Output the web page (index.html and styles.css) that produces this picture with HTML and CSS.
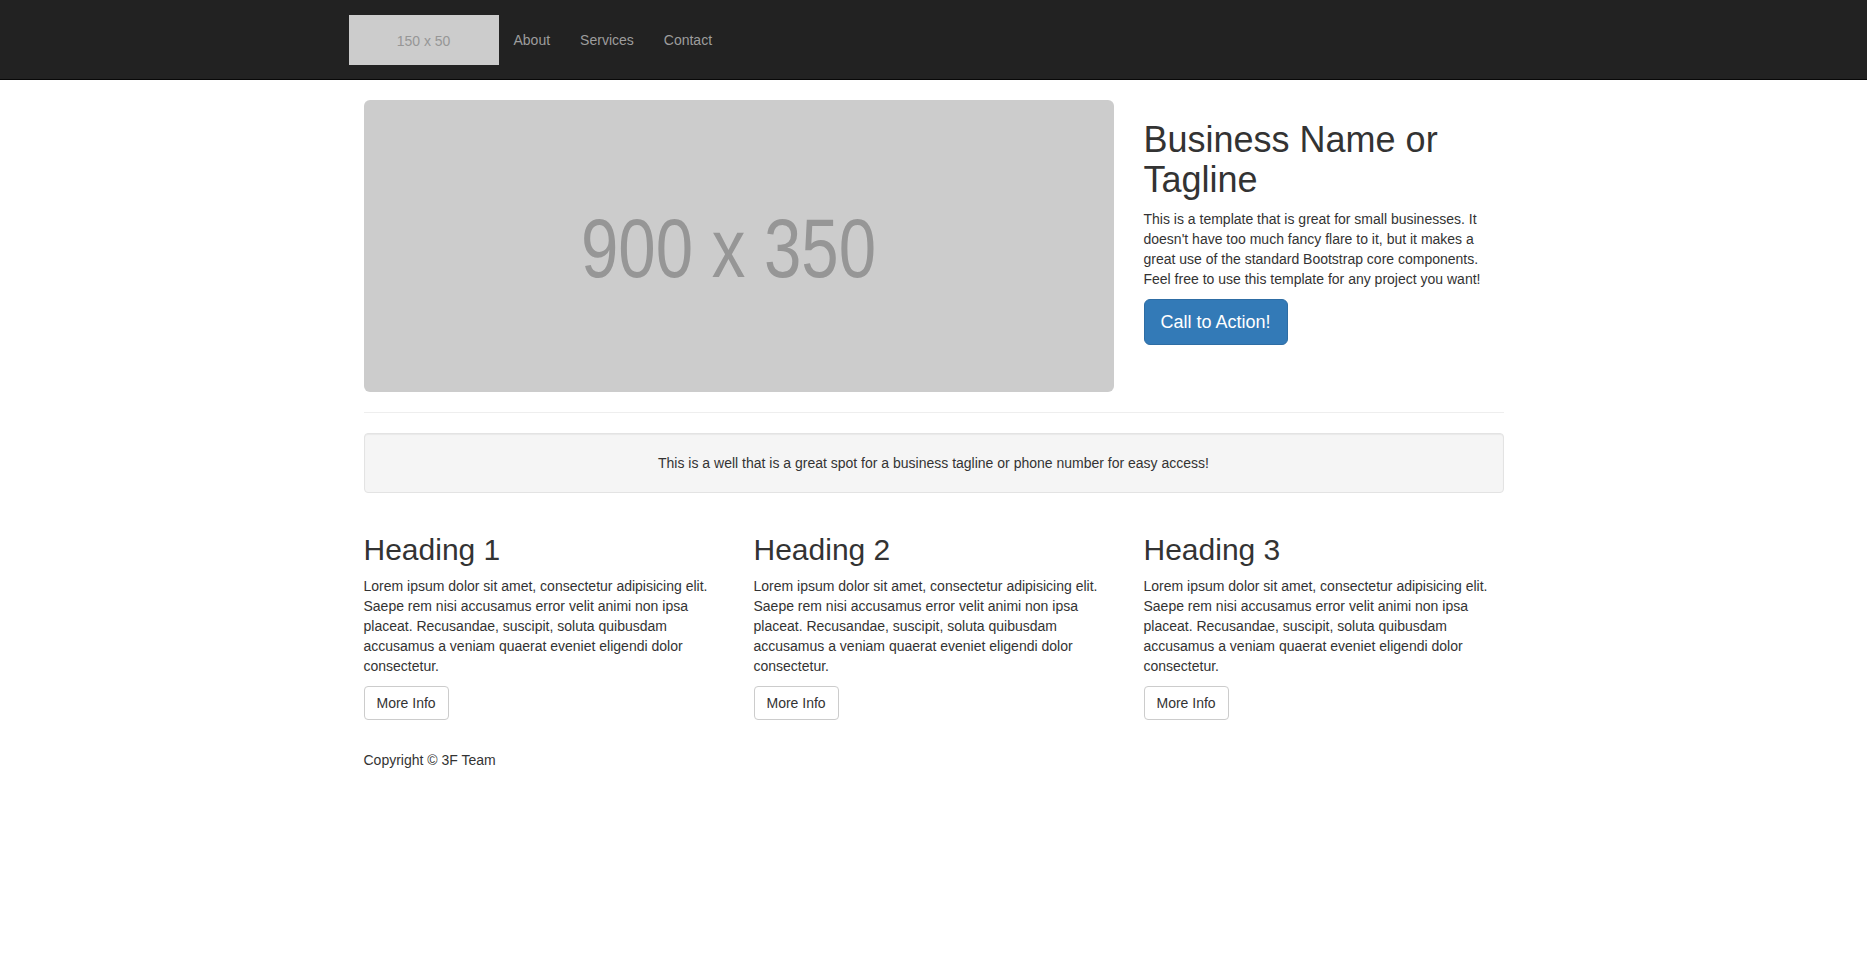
FILE: index.html
```html
<!DOCTYPE html>
<html lang="en">
<head>
<meta charset="utf-8">
<title>Small Business</title>
<link rel="stylesheet" href="styles.css">
</head>
<body>
<nav class="navbar">
  <div class="container nav-inner">
    <a class="brand" href="#"><span class="logo">150 x 50</span></a>
    <ul class="nav-links">
      <li><a href="#">About</a></li>
      <li><a href="#">Services</a></li>
      <li><a href="#">Contact</a></li>
    </ul>
  </div>
</nav>

<div class="container content">
  <div class="row hero">
    <div class="col-8">
      <div class="hero-img"><span class="hero-label">900 x 350</span></div>
    </div>
    <div class="col-4">
      <h1>Business Name or Tagline</h1>
      <p>This is a template that is great for small businesses. It doesn't have too much fancy flare to it, but it makes a great use of the standard Bootstrap core components. Feel free to use this template for any project you want!</p>
      <a class="btn btn-primary btn-lg" href="#">Call to Action!</a>
    </div>
  </div>

  <hr class="divider">

  <div class="well">This is a well that is a great spot for a business tagline or phone number for easy access!</div>

  <div class="row features">
    <div class="col-4">
      <h2>Heading 1</h2>
      <p>Lorem ipsum dolor sit amet, consectetur adipisicing elit. Saepe rem nisi accusamus error velit animi non ipsa placeat. Recusandae, suscipit, soluta quibusdam accusamus a veniam quaerat eveniet eligendi dolor consectetur.</p>
      <a class="btn btn-default" href="#">More Info</a>
    </div>
    <div class="col-4">
      <h2>Heading 2</h2>
      <p>Lorem ipsum dolor sit amet, consectetur adipisicing elit. Saepe rem nisi accusamus error velit animi non ipsa placeat. Recusandae, suscipit, soluta quibusdam accusamus a veniam quaerat eveniet eligendi dolor consectetur.</p>
      <a class="btn btn-default" href="#">More Info</a>
    </div>
    <div class="col-4">
      <h2>Heading 3</h2>
      <p>Lorem ipsum dolor sit amet, consectetur adipisicing elit. Saepe rem nisi accusamus error velit animi non ipsa placeat. Recusandae, suscipit, soluta quibusdam accusamus a veniam quaerat eveniet eligendi dolor consectetur.</p>
      <a class="btn btn-default" href="#">More Info</a>
    </div>
  </div>

  <footer class="footer">
    <p>Copyright &copy; 3F Team</p>
  </footer>
</div>
</body>
</html>
```

FILE: styles.css
```css
* { box-sizing: border-box; }
html, body { margin: 0; padding: 0; }
body {
  font-family: "Liberation Sans", Arial, Helvetica, sans-serif;
  font-size: 14px;
  line-height: 1.42857143;
  color: #333;
  background: #fff;
}
a { text-decoration: none; }
p { margin: 0 0 10px; }

.container {
  width: 1170px;
  margin: 0 auto;
  padding: 0 15px;
}

.navbar {
  background: #222;
  border-bottom: 1px solid #080808;
  height: 80px;
}
.nav-inner {
  display: flex;
  align-items: flex-start;
  height: 79px;
  padding-top: 15px;
  padding-left: 0;
}
.brand { display: block; }
.logo {
  display: flex;
  align-items: center;
  justify-content: center;
  width: 150px;
  height: 50px;
  background: #ccc;
  color: #969696;
  font-size: 14px;
  padding-top: 2px;
}
.nav-links {
  list-style: none;
  margin: 0;
  padding: 0;
  display: flex;
}
.nav-links a {
  display: block;
  padding: 15px 15px;
  line-height: 20px;
  color: #9d9d9d;
  font-size: 14px;
}

.content { padding-top: 20px; }

.row {
  display: flex;
  margin: 0 -15px;
}
.col-8 { width: 780px; padding: 0 15px; }
.col-4 { width: 390px; padding: 0 15px; }

.hero-img {
  height: 292px;
  background: #ccc;
  border-radius: 6px;
  display: flex;
  align-items: center;
  justify-content: center;
  padding: 4px 20px 0 0;
}
.hero-label {
  display: inline-block;
  font-size: 84px;
  line-height: 1;
  color: #969696;
  transform: scaleX(0.8);
}

h1 {
  font-size: 36px;
  font-weight: 500;
  line-height: 1.1;
  margin: 20px 0 10px;
}
h2 {
  font-size: 30px;
  font-weight: 500;
  line-height: 1.1;
  margin: 20px 0 10px;
}

.btn {
  display: inline-block;
  border: 1px solid transparent;
  text-align: center;
  white-space: nowrap;
}
.btn-primary {
  background: #337ab7;
  border-color: #2e6da4;
  color: #fff;
}
.btn-lg {
  font-size: 18px;
  line-height: 1.3333333;
  padding: 10px 16px;
  border-radius: 6px;
}
.btn-default {
  background: #fff;
  border-color: #ccc;
  color: #333;
  font-size: 14px;
  line-height: 1.42857143;
  padding: 6px 12px;
  border-radius: 4px;
}

.divider {
  margin: 20px 0;
  border: 0;
  border-top: 1px solid #eee;
  height: 0;
}

.well {
  min-height: 20px;
  padding: 19px;
  margin-bottom: 20px;
  background: #f5f5f5;
  border: 1px solid #e3e3e3;
  border-radius: 4px;
  box-shadow: inset 0 1px 1px rgba(0,0,0,.05);
  text-align: center;
}

.footer { margin-top: 30px; }
```
